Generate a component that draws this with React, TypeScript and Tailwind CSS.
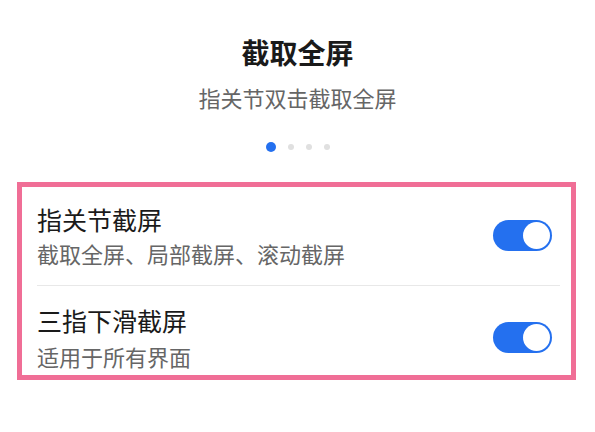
const font = { fontFamily: '"Noto Sans CJK SC", "Noto Sans", sans-serif' };

function Toggle() {
  return (
    <div className="mr-2 flex h-[31px] w-[59px] shrink-0 items-center justify-end rounded-full bg-[#2470ef] p-[2px]">
      <div className="h-[27px] w-[27px] rounded-full bg-white" />
    </div>
  );
}

const rows = [
  { title: '指关节截屏', desc: '截取全屏、局部截屏、滚动截屏', pad: 'pt-4 pb-[18px]', gap: 'mt-1' },
  { title: '三指下滑截屏', desc: '适用于所有界面', pad: 'pt-[18px] pb-[5px]', gap: 'mt-1.5' },
];

export default function App() {
  return (
    <div className="h-[432px] w-[595px] overflow-hidden bg-white" style={font}>
      <div className="flex flex-col items-center pt-[34px]">
        <h1 className="text-[28px] font-bold leading-[36px] text-[#1a1a1a]">截取全屏</h1>
        <p className="mt-3 text-[22px] leading-[30px] text-[#666666]">指关节双击截取全屏</p>
        <div className="mt-[30px] flex h-[10px] items-center gap-3">
          <span className="h-[10px] w-[10px] rounded-full bg-[#2470ef]" />
          <span className="h-[6px] w-[6px] rounded-full bg-[#e0e0e0]" />
          <span className="h-[6px] w-[6px] rounded-full bg-[#e0e0e0]" />
          <span className="h-[6px] w-[6px] rounded-full bg-[#e0e0e0]" />
        </div>
      </div>

      <div className="ml-[17px] mt-[30px] w-[559px] border-[5px] border-[#f06e96] pl-[15px] pr-[11px]">
        {rows.map((r, i) => (
          <div key={r.title}>
            {i > 0 && <div className="h-px bg-[#e8e8e8]" />}
            <div className={`flex items-center justify-between ${r.pad}`}>
              <div>
                <div className="text-[25px] leading-[32px] text-[#1a1a1a]">{r.title}</div>
                <div className={`${r.gap} text-[22px] leading-[28px] text-[#666666]`}>{r.desc}</div>
              </div>
              <Toggle />
            </div>
          </div>
        ))}
      </div>
    </div>
  );
}
